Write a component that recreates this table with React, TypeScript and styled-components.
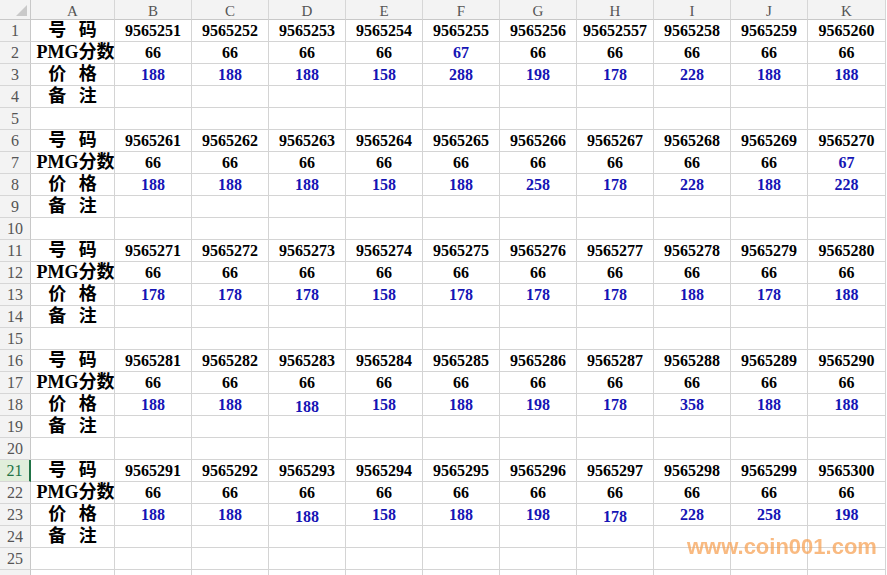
import React from "react";
import styled, { createGlobalStyle } from "styled-components";

const Global = createGlobalStyle`
  html, body { margin: 0; padding: 0; background: #fff; overflow: hidden; }
  #root { width: 887px; height: 575px; }
`;

const Sheet = styled.div`
  position: relative;
  display: grid;
  grid-template-columns: 31px 84px repeat(9, 77px) 78px;
  grid-template-rows: 20px repeat(25, 22px) 20px;
  width: 887px;
  height: 575px;
  overflow: hidden;
  background: #fff;
`;

const Corner = styled.div`
  position: relative;
  background: #f3f3f3;
  border-right: 1px solid #c8c8c8;
  border-bottom: 1px solid #c8c8c8;
  box-sizing: border-box;
  &::after {
    content: "";
    position: absolute;
    right: 3px;
    bottom: 3px;
    width: 0;
    height: 0;
    border-left: 11px solid transparent;
    border-bottom: 11px solid #c9c9c9;
  }
`;

const ColHead = styled.div`
  background: #f3f3f3;
  border-right: 1px solid #d6d6d6;
  border-bottom: 1px solid #c8c8c8;
  box-sizing: border-box;
  display: flex;
  align-items: center;
  justify-content: center;
  padding-top: 3px;
  font-family: "Liberation Serif", serif;
  font-size: 15px;
  color: #555;
`;

const RowHead = styled.div<{ $active?: boolean }>`
  background: ${(p) => (p.$active ? "#e1eedb" : "#f3f3f3")};
  border-right: ${(p) => (p.$active ? "2px solid #217346" : "1px solid #c8c8c8")};
  border-bottom: 1px solid #d6d6d6;
  box-sizing: border-box;
  display: flex;
  align-items: center;
  justify-content: center;
  font-family: "Liberation Serif", serif;
  font-size: 16px;
  color: ${(p) => (p.$active ? "#217346" : "#555")};
`;

const Cell = styled.div<{ $blue?: boolean; $low?: boolean }>`
  border-right: 1px solid #d4d4d4;
  border-bottom: 1px solid #d4d4d4;
  box-sizing: border-box;
  display: flex;
  align-items: center;
  justify-content: center;
  padding-top: ${(p) => (p.$low ? "4px" : "0")};
  font-family: "Liberation Serif", serif;
  font-weight: 700;
  font-size: 16px;
  color: ${(p) => (p.$blue ? "#1515b5" : "#000")};
  white-space: nowrap;
`;

const Label = styled(Cell)<{ $tight?: boolean }>`
  font-family: "Liberation Serif", "Noto Sans CJK SC", serif;
  font-size: 18px;
  line-height: 20px;
  white-space: pre;
  word-spacing: ${(p) => (p.$tight ? "0" : "8px")};
  padding-top: 0;
  padding-bottom: 1px;
  padding-left: ${(p) => (p.$tight ? "6px" : "0")};
`;

const Watermark = styled.div`
  position: absolute;
  left: 687px;
  top: 534px;
  font-family: "Liberation Sans", Arial, sans-serif;
  font-weight: 700;
  font-size: 22px;
  color: rgba(246, 160, 80, 0.72);
  pointer-events: none;
  filter: blur(0.3px);
`;

type Block = {
  start: number;
  ids?: string[];
  scores: number[];
  blueScore?: number[];
  prices: number[];
  low?: number[];
};

const blocks: Block[] = [
  {
    start: 9565251,
    ids: ["9565251", "9565252", "9565253", "9565254", "9565255", "9565256", "95652557", "9565258", "9565259", "9565260"],
    scores: [66, 66, 66, 66, 67, 66, 66, 66, 66, 66],
    blueScore: [4],
    prices: [188, 188, 188, 158, 288, 198, 178, 228, 188, 188],
  },
  {
    start: 9565261,
    scores: [66, 66, 66, 66, 66, 66, 66, 66, 66, 67],
    blueScore: [9],
    prices: [188, 188, 188, 158, 188, 258, 178, 228, 188, 228],
  },
  {
    start: 9565271,
    scores: Array(10).fill(66),
    prices: [178, 178, 178, 158, 178, 178, 178, 188, 178, 188],
  },
  {
    start: 9565281,
    scores: Array(10).fill(66),
    prices: [188, 188, 188, 158, 188, 198, 178, 358, 188, 188],
    low: [2],
  },
  {
    start: 9565291,
    scores: Array(10).fill(66),
    prices: [188, 188, 188, 158, 188, 198, 178, 228, 258, 198],
    low: [2, 6],
  },
];

const cols = ["A", "B", "C", "D", "E", "F", "G", "H", "I", "J", "K"];

export default function App() {
  const rows: React.ReactNode[] = [];
  let r = 1;
  blocks.forEach((b) => {
    const ids = b.ids ?? Array.from({ length: 10 }, (_, i) => String(b.start + i));
    rows.push(<RowHead key={`h${r}`} $active={r === 21}>{r}</RowHead>);
    rows.push(<Label key={`l${r}`}>{"号 码"}</Label>);
    ids.forEach((id, i) => rows.push(<Cell key={`c${r}-${i}`}>{id}</Cell>));
    r++;
    rows.push(<RowHead key={`h${r}`}>{r}</RowHead>);
    rows.push(<Label key={`l${r}`} $tight>{"PMG分数"}</Label>);
    b.scores.forEach((s, i) =>
      rows.push(
        <Cell key={`c${r}-${i}`} $blue={b.blueScore?.includes(i)}>
          {s}
        </Cell>
      )
    );
    r++;
    rows.push(<RowHead key={`h${r}`}>{r}</RowHead>);
    rows.push(<Label key={`l${r}`}>{"价 格"}</Label>);
    b.prices.forEach((p, i) =>
      rows.push(
        <Cell key={`c${r}-${i}`} $blue $low={b.low?.includes(i)}>
          {p}
        </Cell>
      )
    );
    r++;
    rows.push(<RowHead key={`h${r}`}>{r}</RowHead>);
    rows.push(<Label key={`l${r}`}>{"备 注"}</Label>);
    for (let i = 0; i < 10; i++) rows.push(<Cell key={`c${r}-${i}`} />);
    r++;
    rows.push(<RowHead key={`h${r}`}>{r}</RowHead>);
    for (let i = 0; i < 11; i++) rows.push(<Cell key={`c${r}-${i}`} />);
    r++;
  });
  // partially visible row below 25 (its number is hidden by the window edge)
  rows.push(<RowHead key="h26" />);
  for (let i = 0; i < 11; i++) rows.push(<Cell key={`c26-${i}`} />);

  return (
    <>
      <Global />
      <Sheet>
        <Corner />
        {cols.map((c) => (
          <ColHead key={c}>{c}</ColHead>
        ))}
        {rows}
        <Watermark>www.coin001.com</Watermark>
      </Sheet>
    </>
  );
}
